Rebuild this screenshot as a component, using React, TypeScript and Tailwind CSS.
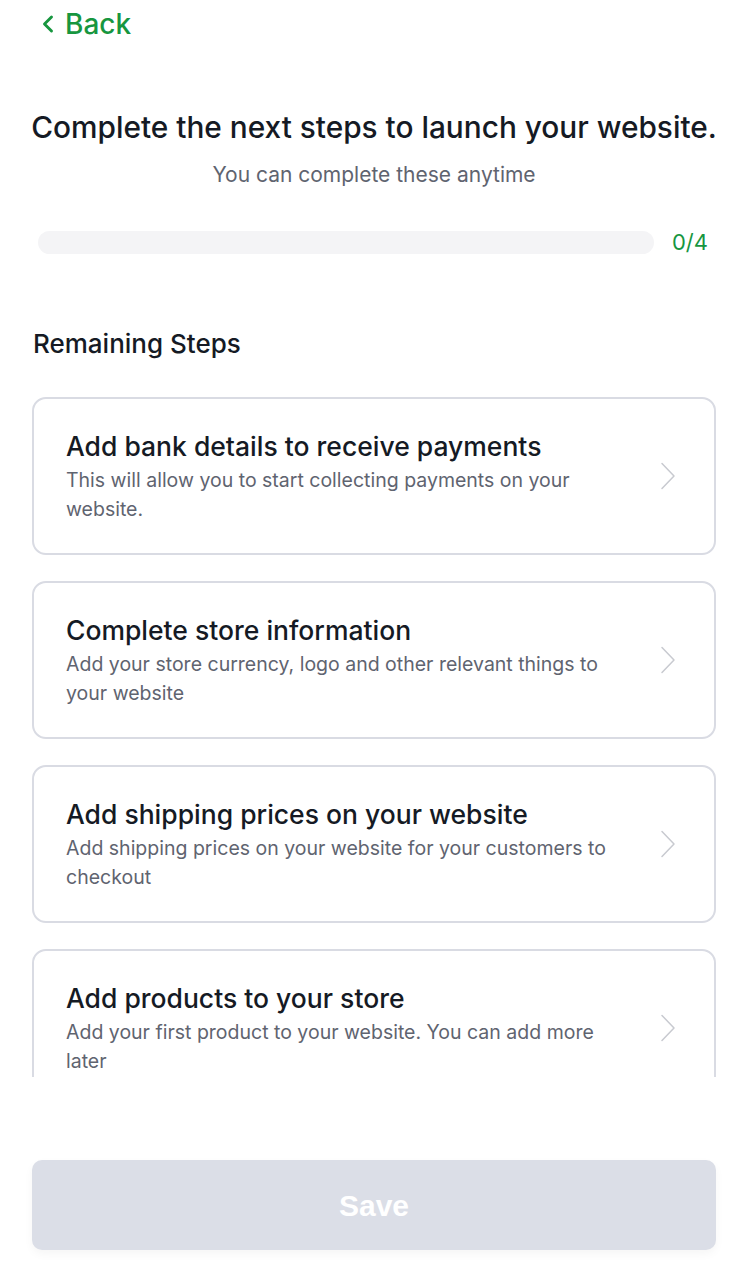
import { ChevronLeft } from "lucide-react"

type Step = { title: string; desc: string }

const steps: Step[] = [
    { title: "Add bank details to receive payments", desc: "This will allow you to start collecting payments on your website." },
    { title: "Complete store information", desc: "Add your store currency, logo and other relevant things to your website" },
    { title: "Add shipping prices on your website", desc: "Add shipping prices on your website for your customers to checkout" },
    { title: "Add products to your store", desc: "Add your first product to your website. You can add more later" },
]

function StepCard({ title, desc }: Step) {
    return (
        <div className="flex items-center border-2 border-[#d9dbe3] rounded-[14px] h-[158px] shrink-0 pl-[32px] pr-[38px]">
            <div className="flex-1 pr-10">
                <p className="text-[26.5px] leading-[34px] font-medium text-[#151a24]">{title}</p>
                <p className="mt-[3px] text-[19.5px] leading-[29px] text-[#5f6470]">{desc}</p>
            </div>
            <svg width="16" height="28" viewBox="0 0 16 28" fill="none" className="shrink-0">
                <path d="M2 1.5 L14 14 L2 26.5" stroke="#c8cad0" strokeWidth="1.5" strokeLinecap="round" strokeLinejoin="round" />
            </svg>
        </div>
    )
}

export default function App() {
    return (
        <div className="w-[748px] h-[1280px] bg-white overflow-hidden flex flex-col" style={{ fontFamily: "Inter, 'Open Sans', sans-serif" }}>
            <div className="flex items-center h-[48px] pl-[34px] text-[#17963f]">
                <ChevronLeft className="w-[28px] h-[28px]" strokeWidth={2.5} />
                <span className="ml-[3px] text-[28px] font-medium">Back</span>
            </div>
            <p className="mt-[57px] text-center text-[29.8px] leading-[44px] font-medium text-[#151a24]">
                Complete the next steps to launch your website.
            </p>
            <p className="mt-[11px] text-center text-[21px] leading-[30px] text-[#5f6470]">You can complete these anytime</p>
            <div className="mt-[36px] flex items-center pl-[38px] pr-[40px]">
                <div className="flex-1 h-[23px] rounded-full bg-[#f4f4f6]" />
                <span className="ml-[18px] text-[22px] text-[#17963f]">0/4</span>
            </div>
            <p className="mt-[68px] pl-[33px] text-[26px] leading-[34px] font-medium text-[#151a24]">Remaining Steps</p>
            <div className="mt-[36px] mx-[32px] h-[680px] overflow-hidden flex flex-col gap-[26px]">
                {steps.map((s) => (
                    <StepCard key={s.title} title={s.title} desc={s.desc} />
                ))}
            </div>
            <div className="mt-[83px] mx-[32px]">
                <button className="w-full h-[90px] rounded-[10px] bg-[#dbdee7] text-white text-[30px] font-bold shadow-[0_4px_10px_rgba(0,0,0,0.04)]" style={{ fontFamily: "'Liberation Sans', Arial, sans-serif" }}>
                    Save
                </button>
            </div>
        </div>
    )
}
